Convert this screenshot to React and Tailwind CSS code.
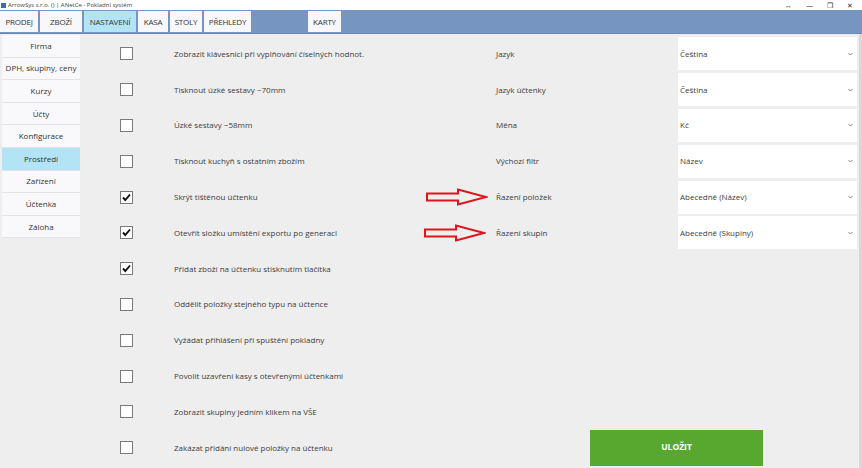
import { useState } from 'react';

const TABS = [
  { label: 'PRODEJ', w: 'w-[38px]' },
  { label: 'ZBOŽÍ', w: 'w-[42px]' },
  { label: 'NASTAVENÍ', w: 'w-[52px]', active: true },
  { label: 'KASA', w: 'w-[30px]' },
  { label: 'STOLY', w: 'w-[32px]' },
  { label: 'PŘEHLEDY', w: 'w-[47px]' },
  { spacer: true, w: 'w-[53px]' },
  { label: 'KARTY', w: 'w-[33px]' },
];

const MENU = ['Firma', 'DPH, skupiny, ceny', 'Kurzy', 'Účty', 'Konfigurace', 'Prostředí', 'Zařízení', 'Účtenka', 'Záloha'];

const OPTIONS = [
  ['Zobrazit klávesnici při vyplňování číselných hodnot.', false],
  ['Tisknout úzké sestavy ~70mm', false],
  ['Úzké sestavy ~58mm', false],
  ['Tisknout kuchyň s ostatním zbožím', false],
  ['Skrýt tištěnou účtenku', true],
  ['Otevřít složku umístění exportu po generaci', true],
  ['Přidat zboží na účtenku stisknutím tlačítka', true],
  ['Oddělit položky stejného typu na účtence', false],
  ['Vyžádat přihlášení při spuštění pokladny', false],
  ['Povolit uzavření kasy s otevřenými účtenkami', false],
  ['Zobrazit skupiny jedním klikem na VŠE', false],
  ['Zakázat přidání nulové položky na účtenku', false],
];

const SELECTS = [
  ['Jazyk', 'Čeština'],
  ['Jazyk účtenky', 'Čeština'],
  ['Měna', 'Kč'],
  ['Výchozí filtr', 'Název'],
  ['Řazení položek', 'Abecedně (Název)'],
  ['Řazení skupin', 'Abecedně (Skupiny)'],
];

const Arrow = ({ className }) => (
  <svg className={className} width="62" height="18" viewBox="0 0 62 18">
    <path d="M1 5.5 H32 V1.5 L60 9 L32 16.5 V12.5 H1 Z" fill="none" stroke="#e0141c" strokeWidth="2" strokeLinejoin="miter" />
  </svg>
);

const Check = ({ on }) => (
  <div className="w-[13px] h-[13px] border border-[#7a7a7a] bg-white flex items-center justify-center">
    {on && (
      <svg width="11" height="11" viewBox="0 0 11 11">
        <path d="M2 5.5 L4.3 8 L9 2.5" fill="none" stroke="#111" strokeWidth="1.9" />
      </svg>
    )}
  </div>
);

export default function App() {
  const [checks, setChecks] = useState(OPTIONS.map(o => o[1]));

  return (
    <div className="w-[862px] h-[468px] overflow-hidden flex flex-col bg-[#eeeeee] text-[#3c3c3c] font-['Open_Sans','Noto_Sans',sans-serif]">
      {/* title bar */}
      <div className="h-[10px] bg-white flex items-center relative">
        <div className="w-[5px] h-[5px] bg-[#3a6fb0] ml-[1px] mr-[2px]" />
        <span className="text-[6px] leading-none text-[#444]">ArrowSys s.r.o. () | ANetCe - Pokladní systém</span>
        <div className="ml-auto flex items-center gap-[14px] pr-[9px] text-[7px] leading-none text-[#333]">
          <span>↔</span>
          <span>—</span>
          <span>❐</span>
          <span>✕</span>
        </div>
      </div>

      {/* tab bar */}
      <div className="h-[24px] bg-[#7795c1] flex gap-[2px] pt-[1px] pb-[1px] border-b border-[#6d89b3]">
        {TABS.map((t, i) =>
          t.spacer ? (
            <div key={i} className={t.w} />
          ) : (
            <div
              key={i}
              className={`${t.w} shrink-0 flex items-center justify-center text-[8px] tracking-[-0.2px] text-[#333] ${t.active ? 'bg-[#b3e4f5]' : 'bg-[#f8f8fc]'}`}
            >
              {t.label}
            </div>
          )
        )}
      </div>

      <div className="flex-1 flex min-h-0">
        {/* side menu */}
        <div className="w-[80px] shrink-0 pl-[2px] pt-[1px]">
          {MENU.map(m => (
            <div
              key={m}
              className={`h-[22.6px] flex items-center justify-center text-[8px] text-[#333] border-b border-[#e4e4e8] ${m === 'Prostředí' ? 'bg-[#b3e4f5]' : 'bg-[#f9f9fc]'}`}
            >
              {m}
            </div>
          ))}
        </div>

        {/* settings */}
        <div className="flex-1 border-r-[3px] border-[#d8d8d8] pt-[2px]">
          {OPTIONS.map((o, i) => (
            <div key={i} className="h-[35.8px] grid grid-cols-[94px_322px_182px_179px] items-center">
              <div className="pl-[40px]" onClick={() => setChecks(c => c.map((v, j) => (j === i ? !v : v)))}>
                <Check on={checks[i]} />
              </div>
              <div className="relative text-[8px] whitespace-nowrap">
                {o[0]}
                {i === 4 && <Arrow className="absolute right-[8px] top-1/2 -translate-y-1/2" />}
                {i === 5 && <Arrow className="absolute right-[10px] top-1/2 -translate-y-1/2" />}
              </div>
              {SELECTS[i] ? (
                <>
                  <div className="text-[8px] whitespace-nowrap">{SELECTS[i][0]}</div>
                  <div className="h-[33px] bg-white flex items-center justify-between pl-[2px] pr-[4px] text-[8px]">
                    <span>{SELECTS[i][1]}</span>
                    <svg width="5" height="4" viewBox="0 0 5 4">
                      <path d="M0.5 1 L2.5 3 L4.5 1" fill="none" stroke="#666" strokeWidth="0.8" />
                    </svg>
                  </div>
                </>
              ) : i === 11 ? (
                <div className="col-span-2 pl-[94px]">
                  <button className="w-[173px] h-[36px] bg-[#58a82f] text-white font-bold text-[8.5px]">ULOŽIT</button>
                </div>
              ) : null}
            </div>
          ))}
        </div>
      </div>
    </div>
  );
}
